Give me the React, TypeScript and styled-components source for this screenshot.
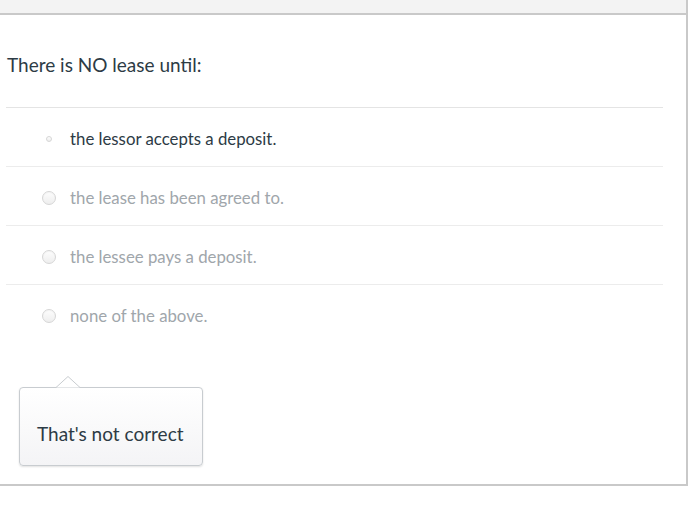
import React from 'react'
import styled, { createGlobalStyle } from 'styled-components'

const GlobalStyle = createGlobalStyle`
    body {
        margin: 0;
        background: #ffffff;
        font-family: Lato, "Liberation Sans", sans-serif;
        color: #2d3b45;
    }
`;

const Panel = styled.div`
    width: 686px;
    border-right: 2px solid #c9c9c9;
    border-bottom: 2px solid #c9c9c9;
    background: #ffffff;
`;

const Header = styled.div`
    height: 13px;
    background: #f3f3f3;
    border-bottom: 2px solid #c9c9c9;
`;

const Body = styled.div`
    padding: 0 23px 18px 6px;
`;

const Question = styled.div`
    height: 93px;
    display: flex;
    align-items: center;
    padding: 6px 0 0 1px;
    box-sizing: border-box;
    font-size: 19px;
    color: #2d3b45;
    border-bottom: 1px solid #e4e4e4;
`;

const OptionList = styled.div`
    display: flex;
    flex-direction: column;
`;

const Option = styled.label<{ $first?: boolean }>`
    height: ${p => (p.$first ? '58px' : '59px')};
    box-sizing: border-box;
    display: flex;
    align-items: center;
    padding: 3px 0 0 36px;
    border-top: ${p => (p.$first ? 'none' : '1px solid #ececec')};
`;

const RadioSlot = styled.span`
    width: 14px;
    height: 14px;
    display: flex;
    align-items: center;
    justify-content: center;
    margin-right: 14px;
`;

const Radio = styled.span<{ $checked?: boolean }>`
    display: block;
    border-radius: 50%;
    box-sizing: border-box;
    width: ${p => (p.$checked ? '6px' : '14px')};
    height: ${p => (p.$checked ? '6px' : '14px')};
    border: 1px solid #d6d6d6;
    background: linear-gradient(to bottom, #fdfdfd, #eeeeee);
    box-shadow: ${p => (p.$checked ? 'none' : 'inset 0 1px 1px rgba(0,0,0,0.04)')};
`;

const OptionText = styled.span<{ $checked?: boolean }>`
    font-size: 16.8px;
    color: ${p => (p.$checked ? '#2d3b45' : '#a0a6ab')};
`;

const TooltipWrap = styled.div`
    position: relative;
    margin: 44px 0 0 13px;
    width: 184px;
`;

const Tooltip = styled.div`
    position: relative;
    height: 79px;
    box-sizing: border-box;
    border: 1px solid #c8ccd0;
    border-radius: 4px;
    background: linear-gradient(to bottom, #ffffff, #f4f4f6);
    box-shadow: 0 1px 2px rgba(0,0,0,0.12);
    display: flex;
    align-items: center;
    padding: 14px 0 0 17px;
    font-size: 19px;
    color: #2d3b45;
`;

const Arrow = styled.svg`
    position: absolute;
    top: -11px;
    left: 37px;
    z-index: 1;
`;

const options = [
    'the lessor accepts a deposit.',
    'the lease has been agreed to.',
    'the lessee pays a deposit.',
    'none of the above.',
];

export default function App() {
    const selected = 0;
    return (
        <>
            <GlobalStyle />
            <Panel>
                <Header />
                <Body>
                    <Question>There is NO lease until:</Question>
                    <OptionList>
                        {options.map((o, i) => (
                            <Option key={o} $first={i === 0}>
                                <RadioSlot>
                                    <Radio $checked={i === selected} />
                                </RadioSlot>
                                <OptionText $checked={i === selected}>{o}</OptionText>
                            </Option>
                        ))}
                    </OptionList>
                    <TooltipWrap>
                        <Tooltip>That's not correct</Tooltip>
                        <Arrow width="24" height="12" viewBox="0 0 24 12">
                            <path d="M0 11.5 L12 0.5 L24 11.5" fill="#ffffff" stroke="#c8ccd0" strokeWidth="1" />
                        </Arrow>
                    </TooltipWrap>
                </Body>
            </Panel>
        </>
    )
}
